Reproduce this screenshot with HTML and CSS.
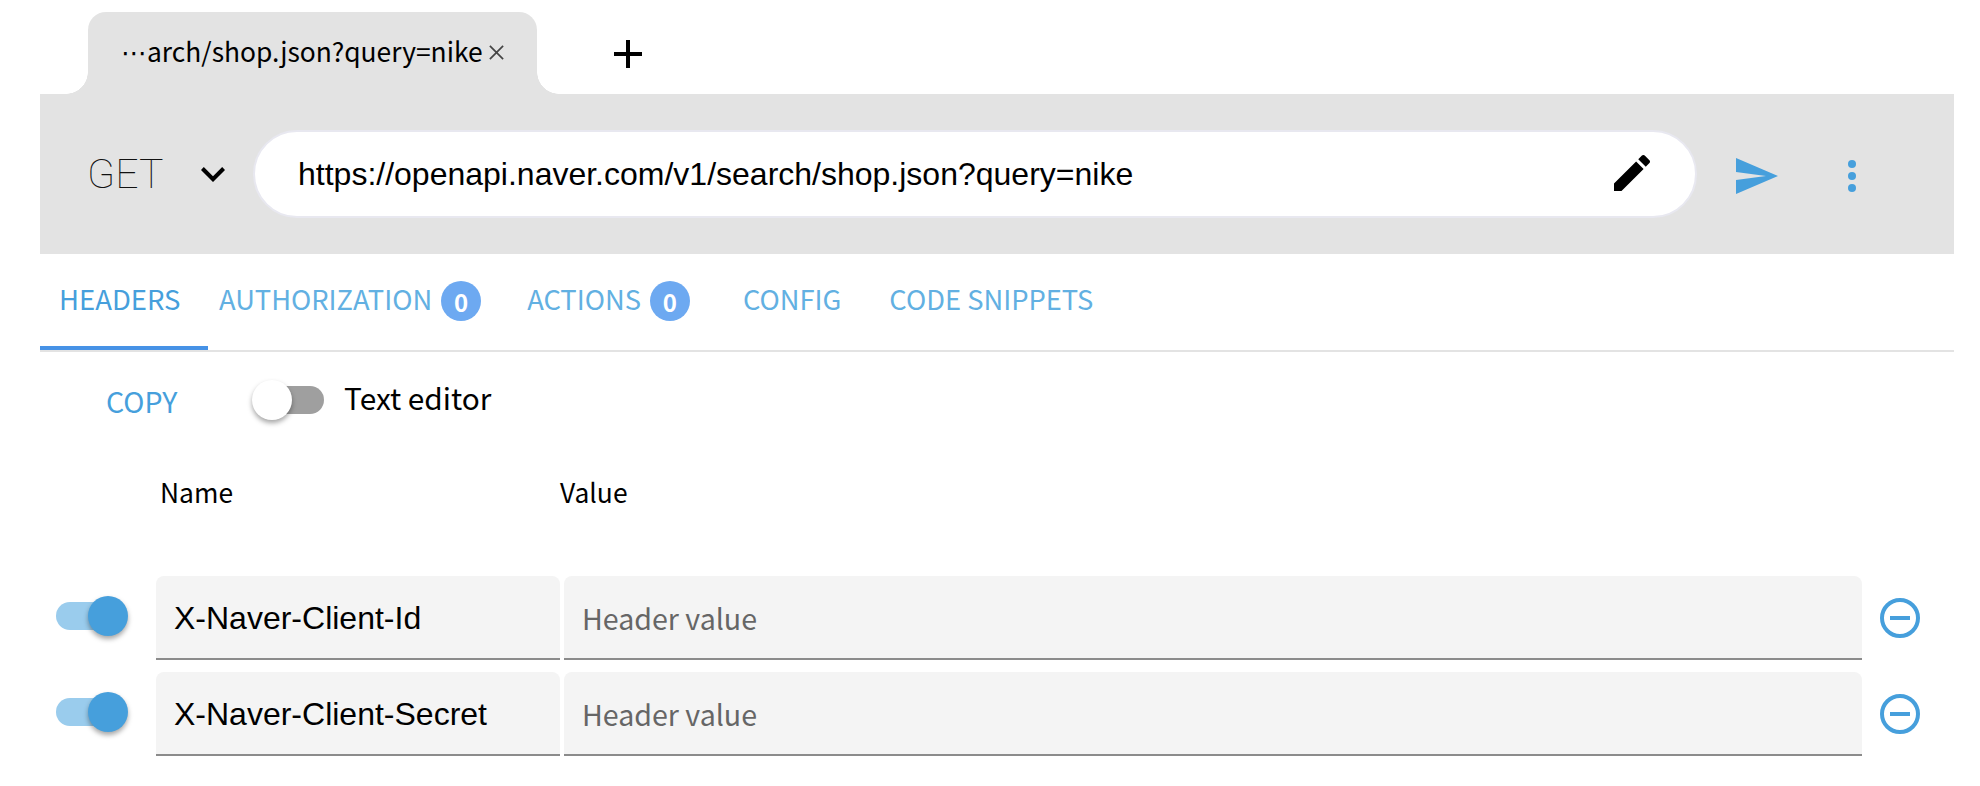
FILE: index.html
```html
<!DOCTYPE html>
<html lang="en">
<head>
<meta charset="utf-8">
<title>Request editor</title>
<link rel="stylesheet" href="styles.css">
</head>
<body>
<main class="app">
  <div class="tabstrip">
    <div class="tab">
      <span class="tab-title"><span class="tab-ellipsis">⋯</span>arch/shop.json?query=nike</span>
      <svg class="tab-close" viewBox="0 0 18 18"><path d="M2 2l14 14M16 2L2 16"/></svg>
    </div>
    <svg class="tab-new" viewBox="0 0 28 28"><path d="M14 0v28M0 14h28"/></svg>
  </div>
  <div class="urlbar">
    <span class="method">GET</span>
    <svg class="chevron" viewBox="6 8.59 12 7.41"><path d="M16.59 8.59L12 13.17 7.41 8.59 6 10l6 6 6-6z"/></svg>
    <div class="url-input">
      <span class="url-text">https://openapi.naver.com/v1/search/shop.json?query=nike</span>
      <svg class="pencil" viewBox="3 3 18 18"><path d="M3 17.25V21h3.75L17.81 9.94l-3.75-3.75L3 17.25zM20.71 7.04c.39-.39.39-1.02 0-1.41l-2.34-2.34c-.39-.39-1.02-.39-1.41 0l-1.83 1.83 3.75 3.75 1.83-1.83z"/></svg>
    </div>
    <svg class="send" viewBox="2 3 21 18"><path d="M2.01 21L23 12 2.01 3 2 10l15 2-15 2z"/></svg>
    <svg class="more" viewBox="0 0 8 32"><circle cx="4" cy="4" r="4"/><circle cx="4" cy="16" r="4"/><circle cx="4" cy="28" r="4"/></svg>
  </div>
  <nav class="sections">
    <span class="section active">HEADERS</span>
    <span class="section auth">AUTHORIZATION<b class="badge">0</b></span>
    <span class="section actions">ACTIONS<b class="badge">0</b></span>
    <span class="section config">CONFIG</span>
    <span class="section code">CODE SNIPPETS</span>
  </nav>
  <div class="toolbar">
    <span class="copy">COPY</span>
    <span class="switch off"><i class="knob"></i></span>
    <span class="switch-label">Text editor</span>
  </div>
  <div class="col-heads">
    <span class="head-name">Name</span>
    <span class="head-value">Value</span>
  </div>
  <div class="rows">
    <div class="row">
      <span class="switch on"><i class="knob"></i></span>
      <div class="field name">X-Naver-Client-Id</div>
      <div class="field value">Header value</div>
      <svg class="remove" viewBox="0 0 40 40"><circle cx="20" cy="20" r="18"/><path d="M10 20h20"/></svg>
    </div>
    <div class="row">
      <span class="switch on"><i class="knob"></i></span>
      <div class="field name">X-Naver-Client-Secret</div>
      <div class="field value">Header value</div>
      <svg class="remove" viewBox="0 0 40 40"><circle cx="20" cy="20" r="18"/><path d="M10 20h20"/></svg>
    </div>
  </div>
</main>
</body>
</html>
```
FILE: styles.css
```css
* { box-sizing: border-box; }
html, body { margin: 0; background: #fff; }
body { font-family: "Noto Sans CJK KR", "Noto Sans", sans-serif; color: #000; overflow: hidden; }
.app { padding: 12px 26px 0 40px; }

.tabstrip { height: 82px; padding-left: 48px; display: flex; align-items: flex-start; }
.tab { position: relative; width: 449px; height: 82px; background: #e3e3e3; border-radius: 18px 18px 0 0; display: flex; align-items: center; padding: 0 0 6px 33px; font-size: 26.4px; white-space: nowrap; }
.tab::before, .tab::after { content: ""; position: absolute; bottom: 0; width: 22px; height: 22px; }
.tab::before { left: -22px; background: radial-gradient(circle at 0 0, #fff 21.5px, #e3e3e3 22px); }
.tab::after { right: -22px; background: radial-gradient(circle at 100% 0, #fff 21.5px, #e3e3e3 22px); }
.tab-title { width: 367px; }
.tab-ellipsis { font-family: "DejaVu Sans", sans-serif; font-size: 26px; }
.tab-close { width: 17px; height: 17px; fill: none; stroke: #444; stroke-width: 1.8; margin-top: 4px; }
.tab-new { width: 28px; height: 28px; margin: 28px 0 0 77px; fill: none; stroke: #000; stroke-width: 4; }

.urlbar { height: 160px; background: #e3e3e3; display: flex; align-items: center; padding-left: 47px; }
.method { width: 114px; font-family: Roboto, sans-serif; font-size: 41px; font-weight: 100; color: #111; line-height: 1; }
.chevron { width: 24px; height: 15px; }
.url-input { width: 1444px; height: 88px; margin-left: 28px; background: #fff; border: 2px solid #e8e8f0; border-radius: 44px; display: flex; align-items: center; justify-content: space-between; padding: 0 45px 0 43px; }
.url-text { font-family: "Liberation Sans", Arial, sans-serif; font-size: 32px; }
.pencil { width: 36px; height: 36px; margin-top: -2px; }
.send { width: 42px; height: 36px; margin: 4px 0 0 39px; fill: #469fdc; }
.more { width: 8px; height: 32px; margin: 4px 0 0 70px; fill: #469fdc; }

.sections { height: 98px; border-bottom: 2px solid #e3e3e3; display: flex; font-size: 27.3px; color: #62b0e2; }
.section { height: 96px; display: flex; align-items: center; white-space: nowrap; padding-bottom: 8px; }
.section.active { color: #469fdc; width: 168px; padding: 0 0 5px 19px; border-bottom: 4px solid #4692e6; font-size: 27.5px; }
.auth { margin-left: 11px; }
.actions { margin-left: 46px; }
.config { margin-left: 53px; }
.code { margin-left: 48px; }
.badge { width: 40px; height: 40px; margin: 6px 0 0 9px; border-radius: 50%; background: #6da9f1; color: #fff; font-size: 24px; font-weight: 700; display: flex; align-items: center; justify-content: center; }

.toolbar { height: 96px; display: flex; align-items: center; padding-left: 66px; }
.copy { width: 146px; font-size: 28.5px; color: #469fdc; margin-top: 1px; }
.switch { position: relative; display: block; width: 68px; height: 28px; border-radius: 14px; flex: none; }
.switch.off { background: #9f9f9f; margin-left: 4px; }
.switch.on { background: #9acced; margin: 0 0 4px 16px; }
.knob { position: absolute; top: -6px; width: 40px; height: 40px; border-radius: 50%; box-shadow: 0 3px 5px rgba(0,0,0,.35); }
.off .knob { left: -4px; background: #fff; }
.on .knob { right: -4px; background: #469fdc; }
.switch-label { margin: -6px 0 0 20px; font-size: 29.8px; }

.col-heads { height: 128px; padding: 26px 0 0 120px; display: flex; align-items: flex-start; font-size: 26.4px; line-height: 36px; }
.head-name { width: 400px; }

.rows { display: flex; flex-direction: column; gap: 12px; }
.row { height: 84px; display: flex; align-items: center; }
.field { height: 84px; background: #f4f4f4; border-bottom: 2px solid #8b8b8b; border-radius: 8px 8px 0 0; display: flex; align-items: center; font-family: "Liberation Sans", Arial, sans-serif; font-size: 32px; }
.name { width: 404px; margin-left: 32px; padding: 2px 0 0 18px; }
.value { width: 1298px; margin-left: 4px; padding-left: 18px; font-family: "Noto Sans CJK KR", sans-serif; font-size: 28.6px; color: #666; }
.remove { width: 40px; height: 40px; margin-left: 18px; fill: none; stroke: #469fdc; stroke-width: 4; }
```
